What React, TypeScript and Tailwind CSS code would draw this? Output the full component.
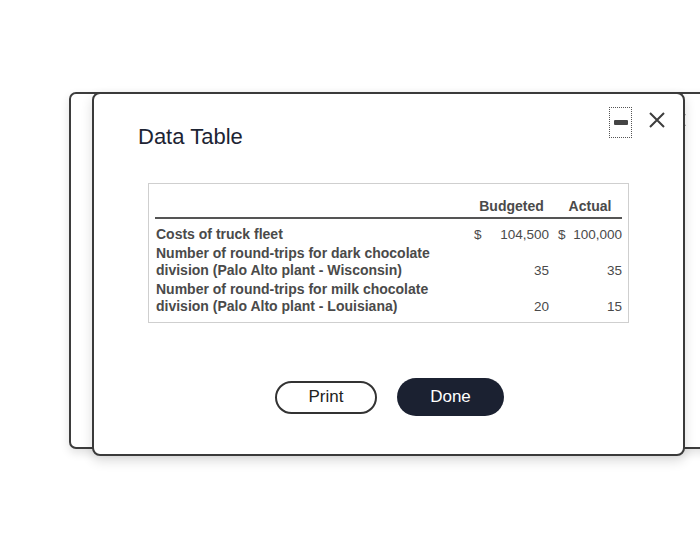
import React from "react";

const rows = [
  { label: ["Costs of truck fleet"], b: "104,500", a: "100,000", dollar: true },
  { label: ["Number of round-trips for dark chocolate", "division (Palo Alto plant - Wisconsin)"], b: "35", a: "35", dollar: false },
  { label: ["Number of round-trips for milk chocolate", "division (Palo Alto plant - Louisiana)"], b: "20", a: "15", dollar: false },
];

export default function App() {
  return (
    <div className="w-[700px] h-[548px] bg-white overflow-hidden relative" style={{ fontFamily: '"Liberation Sans", Arial, sans-serif' }}>
      <div className="relative pt-[92px]">
        {/* back window */}
        <div className="absolute left-[69px] top-[92px] w-[700px] h-[357px] border-2 border-[#3d3d3d] rounded-[7px] bg-white shadow-[0_4px_10px_rgba(0,0,0,0.12)]">
          <svg className="absolute left-[600px] top-[18px]" width="16" height="16" viewBox="0 0 16 16">
            <path d="M2 2 L14 14 M14 2 L2 14" stroke="#444" strokeWidth="2" />
          </svg>
        </div>
        {/* front window */}
        <div className="relative ml-[92px] w-[593px] h-[364px] border-2 border-[#3a3a3a] rounded-[8px] bg-white shadow-[0_5px_12px_rgba(0,0,0,0.14)]">
          <div className="flex items-start justify-between pl-[44px] pr-[17px] pt-[13px]">
            <div className="pt-[17px] text-[22px] leading-[26px] text-[#1d2433]">Data Table</div>
            <div className="flex items-start gap-[16px]">
              <div className="w-[23px] h-[31px] border border-dotted border-[#555] flex items-center justify-center">
                <div className="w-[14px] h-[5px] bg-[#444] rounded-[1px]" />
              </div>
              <svg className="mt-[4px]" width="18" height="18" viewBox="0 0 18 18">
                <path d="M2 2 L16 16 M16 2 L2 16" stroke="#3d3d3d" strokeWidth="2" />
              </svg>
            </div>
          </div>

          <div className="mt-[33px] ml-[54px] w-[481px] border border-[#cfcfcf] pl-[6px] pr-[6px] pt-[14px] pb-[6px] text-[14px] leading-[17px] text-[#4a4a4a]">
            <div className="grid grid-cols-[1fr_75px_64px] gap-x-[9px] border-b-2 border-[#555] pb-[2px]">
              <div />
              <div className="text-center font-bold">Budgeted</div>
              <div className="text-center font-bold">Actual</div>
            </div>
            <div className="pt-[6px]">
              {rows.map((r, i) => (
                <div key={i} className="grid grid-cols-[1fr_75px_64px] gap-x-[9px] py-[1px]">
                  <div className="font-bold pl-[1px]">
                    {r.label.map((l, j) => (
                      <div key={j}>{l}</div>
                    ))}
                  </div>
                  <div className="flex justify-between items-end text-[13.5px]">
                    <span>{r.dollar ? "$" : ""}</span>
                    <span>{r.b}</span>
                  </div>
                  <div className="flex justify-between items-end text-[13.5px]">
                    <span>{r.dollar ? "$" : ""}</span>
                    <span>{r.a}</span>
                  </div>
                </div>
              ))}
            </div>
          </div>

          <div className="flex justify-center items-center gap-[20px] mt-[55px] pl-[2px]">
            <button className="w-[102px] h-[33px] rounded-full border-2 border-[#333] bg-white text-[17px] text-[#222]">Print</button>
            <button className="w-[107px] h-[38px] rounded-full bg-[#1b2131] text-[17px] text-white">Done</button>
          </div>
        </div>
      </div>
    </div>
  );
}
